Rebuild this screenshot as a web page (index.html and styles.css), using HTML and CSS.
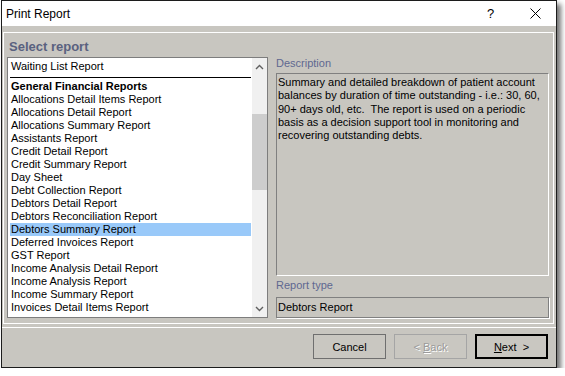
FILE: index.html
```html
<!DOCTYPE html>
<html>
<head>
<meta charset="utf-8">
<link rel="stylesheet" href="styles.css">
</head>
<body>
<div class="window">
  <div class="titlebar">
    <span class="title">Print Report</span>
    <span class="help">?</span>
    <span class="close"><svg width="11" height="11" viewBox="0 0 11 11"><path d="M0.5 0.5 L10.5 10.5 M10.5 0.5 L0.5 10.5" stroke="#000" stroke-width="1" fill="none"/></svg></span>
  </div>
  <div class="client">
    <div class="panel">
      <div class="heading">Select report</div>
      <div class="content">
        <div class="listbox">
          <div class="items">
            <div class="item">Waiting List Report</div>
            <div class="group-rule"></div>
            <div class="item group">General Financial Reports</div>
            <div class="item">Allocations Detail Items Report</div>
            <div class="item">Allocations Detail Report</div>
            <div class="item">Allocations Summary Report</div>
            <div class="item">Assistants Report</div>
            <div class="item">Credit Detail Report</div>
            <div class="item">Credit Summary Report</div>
            <div class="item">Day Sheet</div>
            <div class="item">Debt Collection Report</div>
            <div class="item">Debtors Detail Report</div>
            <div class="item">Debtors Reconciliation Report</div>
            <div class="item selected">Debtors Summary Report</div>
            <div class="item">Deferred Invoices Report</div>
            <div class="item">GST Report</div>
            <div class="item">Income Analysis Detail Report</div>
            <div class="item">Income Analysis Report</div>
            <div class="item">Income Summary Report</div>
            <div class="item">Invoices Detail Items Report</div>
          </div>
          <div class="scrollbar">
            <div class="arrow"><svg width="9" height="6" viewBox="0 0 9 6"><path d="M1 5 L4.5 1.5 L8 5" stroke="#606060" stroke-width="1.4" fill="none"/></svg></div>
            <div class="track"><div class="thumb"></div></div>
            <div class="arrow"><svg width="9" height="6" viewBox="0 0 9 6"><path d="M1 1 L4.5 4.5 L8 1" stroke="#606060" stroke-width="1.4" fill="none"/></svg></div>
          </div>
        </div>
        <div class="details">
          <div class="label">Description</div>
          <div class="desc">Summary and detailed breakdown of patient account<br>balances by duration of time outstanding - i.e.: 30, 60,<br>90+ days old, etc.&nbsp; The report is used on a periodic<br>basis as a decision support tool in monitoring and<br>recovering outstanding debts.</div>
          <div class="label type-label">Report type</div>
          <div class="type-box">Debtors Report</div>
        </div>
      </div>
    </div>
    <div class="separator"></div>
    <div class="buttons">
      <div class="btn">Cancel</div>
      <div class="btn disabled">&lt;&nbsp; <u>B</u>ack</div>
      <div class="btn default"><u>N</u>ext&nbsp; &gt;</div>
    </div>
  </div>
</div>
</body>
</html>
```
FILE: styles.css
```css
* { box-sizing: border-box; }
html, body { margin: 0; padding: 0; background: #fff; }
body {
  font-family: "Liberation Sans", Arial, sans-serif;
  font-size: 11px;
  color: #000;
}
.window {
  margin-left: 1px;
  width: 556px;
  height: 368px;
  border: 1px solid #1c1c1c;
  background: #c8c6c0;
  box-shadow: 4px 4px 5px rgba(0, 0, 0, 0.55);
  display: flex;
  flex-direction: column;
}
.titlebar {
  height: 25px;
  background: #fff;
  display: flex;
  align-items: center;
}
.title {
  font-size: 12px;
  margin-left: 4px;
  flex: 1;
}
.help {
  font-size: 13px;
  width: 12px;
  margin-right: 31px;
}
.close {
  width: 11px;
  height: 11px;
  margin-right: 15px;
  display: flex;
}
.client {
  flex: 1;
  display: flex;
  flex-direction: column;
}
.panel {
  margin: 6px 2px 0 1px;
  height: 292px;
  border: 1px solid #fff;
  padding: 0 4px 0 3px;
  display: flex;
  flex-direction: column;
}
.heading {
  font-size: 13px;
  font-weight: bold;
  color: #59617f;
  line-height: 16px;
  padding: 6px 0 0 2px;
  height: 24px;
}
.content {
  display: flex;
  gap: 8px;
  height: 261px;
}
.listbox {
  width: 261px;
  height: 261px;
  border: 1px solid #7d7d7d;
  background: #fff;
  display: flex;
}
.items {
  flex: 1;
  margin: 0 1px 0 2px;
  padding-top: 2px;
  overflow: hidden;
}
.item {
  height: 13px;
  line-height: 13px;
  padding-left: 1px;
  white-space: nowrap;
}
.item.group { font-weight: bold; }
.item.selected { background: #99c9f9; }
.group-rule {
  height: 1px;
  background: #000;
  margin: 4px 0 2px 0;
}
.scrollbar {
  width: 15px;
  background: #f0f0f0;
  display: flex;
  flex-direction: column;
}
.arrow {
  height: 17px;
  display: flex;
  align-items: center;
  justify-content: center;
}
.track {
  flex: 1;
  padding-top: 39px;
}
.thumb {
  height: 76px;
  background: #cdcdcd;
}
.details {
  flex: 1;
  display: flex;
  flex-direction: column;
}
.label {
  color: #5f6890;
  line-height: 13px;
  height: 13px;
}
.desc {
  margin-top: 3px;
  height: 203px;
  border-top: 1px solid #808080;
  border-left: 1px solid #808080;
  border-right: 1px solid #fff;
  border-bottom: 1px solid #fff;
  padding: 2px 1px;
  line-height: 13.3px;
  white-space: nowrap;
}
.type-label { margin-top: 3px; }
.type-box {
  margin-top: 5px;
  height: 21px;
  border: 1px solid #808080;
  box-shadow: 1px 1px 0 #fff;
  line-height: 19px;
  padding-left: 1px;
}
.separator {
  margin-top: 3px;
  height: 1px;
  background: #fff;
}
.buttons {
  margin-top: 6px;
  display: flex;
  justify-content: flex-end;
  gap: 8px;
  padding-right: 8px;
}
.btn {
  width: 73px;
  height: 25px;
  border: 1px solid #6f6f6f;
  background: #c9c7c1;
  display: flex;
  align-items: center;
  justify-content: center;
  font-size: 11px;
}
.btn.disabled {
  border-color: #a5a5a5;
  color: #9a9a9a;
  text-shadow: 1px 1px 0 #fff;
}
.btn.default {
  border-color: #000;
  box-shadow: inset 0 0 0 1px #000;
}
```
